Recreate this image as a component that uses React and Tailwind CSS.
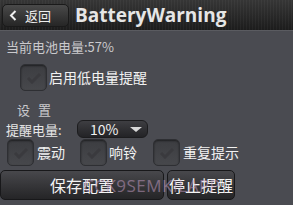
import React from "react";

const font = { fontFamily: '"Noto Sans CJK SC", "Noto Sans", sans-serif' };

function Check({ className = "" }) {
  return (
    <div
      className={`w-[27px] h-[27px] shrink-0 rounded-[5px] border border-[#2e2f33] bg-gradient-to-b from-[#3c3d41] to-[#47484c] shadow-[inset_0_1px_2px_rgba(0,0,0,0.5)] flex items-center justify-center ${className}`}
    >
      <svg width="16" height="12" viewBox="0 0 16 12">
        <path d="M2 6 L6 10 L14 2" stroke="#3a3a3e" strokeWidth="3" fill="none" />
      </svg>
    </div>
  );
}

export default function App() {
  return (
    <div
      className="w-[293px] h-[205px] bg-[#4a4b51] overflow-hidden relative text-white"
      style={font}
    >
      {/* title bar */}
      <div className="h-[31px] bg-[repeating-linear-gradient(90deg,rgba(255,255,255,0.035)_0px,rgba(255,255,255,0.035)_1px,transparent_1px,transparent_3px),linear-gradient(180deg,#363636,#1c1c1c)] border-b border-[#5a5b60] flex items-center px-[2px] gap-[6px]">
        <div className="w-[67px] h-[23px] rounded-[5px] bg-gradient-to-b from-[#4a4a4a] to-[#262626] border border-[#1a1a1a] flex items-center pl-[6px] gap-[8px] text-[13px] leading-none text-[#eee]">
          <svg width="8" height="11" viewBox="0 0 8 11">
            <path d="M6.5 1 L2 5.5 L6.5 10" stroke="#eee" strokeWidth="2" fill="none" />
          </svg>
          <span>返回</span>
        </div>
        <div
          className="text-[19px] font-bold text-[#e6e6e6] leading-none"
          style={{ fontFamily: '"Open Sans", "DejaVu Sans", sans-serif' }}
        >
          BatteryWarning
        </div>
      </div>

      <div className="pl-[6px] pt-[8px] text-[13px] leading-[16px] text-[#c9c9cc]">
        当前电池电量:57%
      </div>

      <div className="flex items-center mt-[9px] ml-[20px] gap-[2px]">
        <Check />
        <span className="text-[14px] text-[#f2f2f2]">启用低电量提醒</span>
      </div>

      <div className="ml-[17px] mt-[12px] text-[13px] leading-[14px] text-[#c9c9cc] tracking-[8px]">
        设置
      </div>

      <div className="flex items-center ml-[6px] mt-[3px] gap-[6px]">
        <span className="text-[13px] text-[#e6e6e6] leading-none w-[65px]">提醒电量:</span>
        <div className="w-[71px] h-[18px] rounded-[6px] bg-gradient-to-b from-[#3e3e42] to-[#232326] border border-[#1c1c1e] flex items-center pl-[12px] gap-[12px] text-[14px] leading-none text-[#f0f0f0]">
          <span>10%</span>
          <svg width="12" height="5" viewBox="0 0 12 5">
            <path d="M0 0 H12 L6 5 Z" fill="#d8d8d8" />
          </svg>
        </div>
      </div>

      <div className="flex items-center ml-[7px] mt-[1px]">
        <Check />
        <span className="text-[14px] text-[#f2f2f2] ml-[3px] w-[43px]">震动</span>
        <Check />
        <span className="text-[14px] text-[#f2f2f2] ml-[2px] w-[44px]">响铃</span>
        <Check />
        <span className="text-[14px] text-[#f2f2f2] ml-[3px]">重复提示</span>
      </div>

      <div className="flex mt-[4px] gap-[3px]">
        <div className="w-[164px] h-[30px] rounded-[5px] bg-gradient-to-b from-[#48484c] to-[#252527] border border-[#18181a] flex items-center justify-center text-[16px] text-[#f4f4f4]">
          保存配置
        </div>
        <div className="w-[68px] h-[30px] rounded-[5px] bg-gradient-to-b from-[#48484c] to-[#252527] border border-[#18181a] flex items-center justify-center text-[16px] text-[#f4f4f4]">
          停止提醒
        </div>
      </div>

      <div
        className="absolute left-[83px] top-[177px] text-[17px] leading-none text-[#c9a0c8] opacity-50 tracking-[0.5px] pointer-events-none"
        style={{ fontFamily: '"Open Sans", sans-serif' }}
      >
        CCK9SEMKILAPP
      </div>
    </div>
  );
}
